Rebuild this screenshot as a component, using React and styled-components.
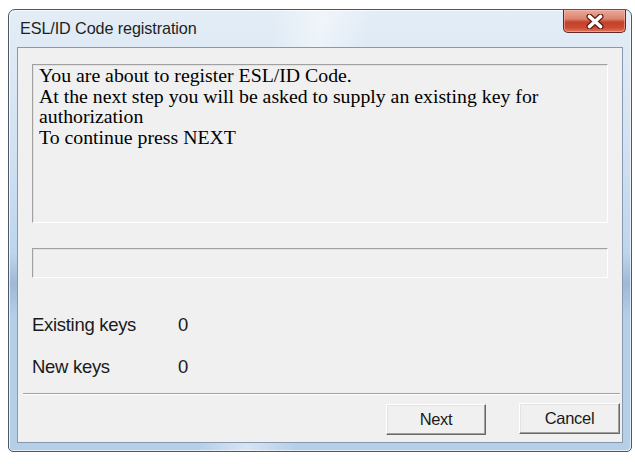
import React from 'react'
import styled, { createGlobalStyle } from 'styled-components'

const GlobalStyle = createGlobalStyle`
	html, body {
		margin: 0;
		padding: 0;
		background: #ffffff;
	}
`

const Window = styled.div`
	box-sizing: border-box;
	margin: 9px 0 0 8px;
	width: 624px;
	height: 443px;
	display: flex;
	flex-direction: column;
	padding: 0 8px 8px 8px;
	border: 1px solid #4d5864;
	border-radius: 7px 7px 5px 5px;
	background:
		linear-gradient(100deg, rgba(255, 255, 255, 0) 38%, rgba(255, 255, 255, 0.45) 45%, rgba(255, 255, 255, 0) 52%),
		linear-gradient(to bottom, #e4edf6 0%, #d2e2f2 30%, #bed5ec 55%, #9fb9d6 62%, #b6cfe9 70%, #b6cfe9 100%);
	box-shadow: inset 1px 1px 0 rgba(255, 255, 255, 0.7), inset -1px -1px 0 rgba(255, 255, 255, 0.6);
`

const TitleBar = styled.div`
	height: 37px;
	display: flex;
	justify-content: space-between;
	align-items: flex-start;
	flex-shrink: 0;
`

const Title = styled.span`
	align-self: center;
	margin-left: 3px;
	font-family: "Liberation Sans", Arial, sans-serif;
	font-size: 16.2px;
	color: #1e1e1e;
	letter-spacing: -0.1px;
`

const CloseButton = styled.button`
	width: 63px;
	height: 23px;
	margin-right: -3px;
	padding: 0;
	display: flex;
	align-items: center;
	justify-content: center;
	border: 1px solid #5f2a22;
	border-top: none;
	border-radius: 0 0 5px 5px;
	background: linear-gradient(to bottom, #e9a899 0%, #dc8670 40%, #c4412a 55%, #cc4a31 80%, #e0775c 100%);
	box-shadow: inset 0 0 0 1px rgba(255, 200, 190, 0.5);
`

const Client = styled.div`
	flex: 1;
	display: flex;
	flex-direction: column;
	background: #f0f0f0;
	border: 1px solid #8699ad;
	padding: 16px 2px 0 14px;
`

const Sunken = styled.div`
	box-sizing: border-box;
	margin-right: 12px;
	height: ${(p) => p.$h}px;
	margin-top: ${(p) => p.$mt || 0}px;
	border: 1px solid;
	border-color: #a0a0a0 #ffffff #ffffff #a0a0a0;
	box-shadow: inset 1px 1px 0 #e3e3e3;
	background: #f0f0f0;
`

const Message = styled.div`
	padding: 0 6px;
	font-family: "Liberation Serif", "Times New Roman", serif;
	font-size: 19.8px;
	line-height: 20.7px;
	color: #000;
`

const Stats = styled.div`
	margin-top: 36px;
	display: flex;
	flex-direction: column;
	gap: 20px;
`

const StatRow = styled.div`
	display: flex;
	height: 22px;
	align-items: center;
	font-family: "Liberation Sans", Arial, sans-serif;
	font-size: 18.5px;
	color: #1a1a1a;
	letter-spacing: -0.3px;
`

const StatLabel = styled.span`
	width: 146px;
`

const Separator = styled.div`
	margin: 15px 0 0 -9px;
	border-top: 1px solid #a0a0a0;
	border-bottom: 1px solid #ffffff;
`

const ButtonRow = styled.div`
	margin-top: 8px;
	display: flex;
	justify-content: flex-end;
	gap: 33px;
`

const Button = styled.button`
	box-sizing: border-box;
	width: ${(p) => p.$w}px;
	height: 31px;
	margin-top: ${(p) => p.$mt || 0}px;
	padding: 0;
	background: #f0f0f0;
	border: 1px solid;
	border-color: #ffffff #696969 #696969 #ffffff;
	box-shadow: inset -1px -1px 0 #a0a0a0, inset 1px 1px 0 #e3e3e3;
	font-family: "Liberation Sans", Arial, sans-serif;
	font-size: 16.5px;
	color: #1a1a1a;
	letter-spacing: -0.3px;
`

const CloseGlyph = () => (
	<svg width="20" height="15" viewBox="0 0 20 15">
		<path d="M4.5 2.5 L15.5 12.5 M15.5 2.5 L4.5 12.5" stroke="#5a1d14" strokeWidth="6" strokeLinecap="round" fill="none" />
		<path d="M4.5 2.5 L15.5 12.5 M15.5 2.5 L4.5 12.5" stroke="#ffffff" strokeWidth="3.6" strokeLinecap="round" fill="none" />
	</svg>
)

export default function App() {
	return (
		<>
			<GlobalStyle />
			<Window>
				<TitleBar>
					<Title>ESL/ID Code registration</Title>
					<CloseButton aria-label='Close'>
						<CloseGlyph />
					</CloseButton>
				</TitleBar>
				<Client>
					<Sunken $h={159}>
						<Message>
							You are about to register ESL/ID Code.
							<br />
							At the next step you will be asked to supply an existing key for
							<br />
							authorization
							<br />
							To continue press NEXT
						</Message>
					</Sunken>
					<Sunken $h={30} $mt={25} />
					<Stats>
						<StatRow>
							<StatLabel>Existing keys</StatLabel>
							<span>0</span>
						</StatRow>
						<StatRow>
							<StatLabel>New keys</StatLabel>
							<span>0</span>
						</StatRow>
					</Stats>
					<Separator />
					<ButtonRow>
						<Button $w={100} $mt={1}>Next</Button>
						<Button $w={101}>Cancel</Button>
					</ButtonRow>
				</Client>
			</Window>
		</>
	)
}
